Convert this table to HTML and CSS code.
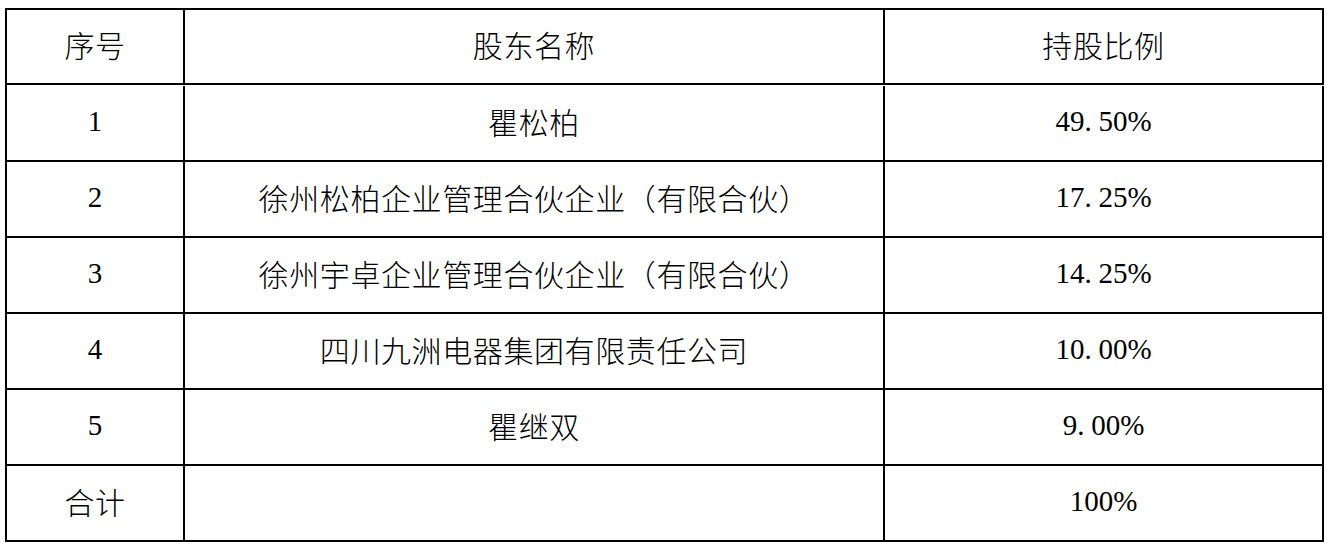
FILE: index.html
```html
<!DOCTYPE html>
<html lang="zh">
<head>
<meta charset="utf-8">
<link rel="stylesheet" href="styles.css">
</head>
<body>
<div class="table">
  <div class="cell head">序号</div>
  <div class="cell head">股东名称</div>
  <div class="cell head">持股比例</div>

  <div class="cell num">1</div>
  <div class="cell">瞿松柏</div>
  <div class="cell num">49<span class="dot">.</span>50%</div>

  <div class="cell num">2</div>
  <div class="cell">徐州松柏企业管理合伙企业（有限合伙）</div>
  <div class="cell num">17<span class="dot">.</span>25%</div>

  <div class="cell num">3</div>
  <div class="cell">徐州宇卓企业管理合伙企业（有限合伙）</div>
  <div class="cell num">14<span class="dot">.</span>25%</div>

  <div class="cell num">4</div>
  <div class="cell">四川九洲电器集团有限责任公司</div>
  <div class="cell num">10<span class="dot">.</span>00%</div>

  <div class="cell num">5</div>
  <div class="cell">瞿继双</div>
  <div class="cell num">9<span class="dot">.</span>00%</div>

  <div class="cell">合计</div>
  <div class="cell"></div>
  <div class="cell num">100%</div>
</div>
</body>
</html>
```
FILE: styles.css
```css
html, body {
  margin: 0;
  background: #ffffff;
}
body {
  padding: 8px 0 0 5px;
  font-family: "Noto Sans CJK SC", sans-serif;
  font-weight: 300;
  color: #000000;
}
.table {
  display: grid;
  grid-template-columns: 178px 700px 439px;
  grid-auto-rows: 76px;
  width: 1319px;
  box-sizing: border-box;
  border-top: 2px solid #000;
  border-left: 2px solid #000;
}
.cell {
  box-sizing: border-box;
  border-right: 2px solid #000;
  border-bottom: 2px solid #000;
  display: flex;
  align-items: center;
  justify-content: center;
  font-size: 30px;
  letter-spacing: 0.6px;
  line-height: 1;
  white-space: nowrap;
  padding-bottom: 5px;
}
.head {
  height: 75px;
}
.num {
  font-family: "Liberation Serif", serif;
  font-weight: 400;
  font-size: 29px;
  letter-spacing: 0;
  padding-bottom: 3px;
}
.dot {
  display: inline-block;
  width: 14px;
}
```
